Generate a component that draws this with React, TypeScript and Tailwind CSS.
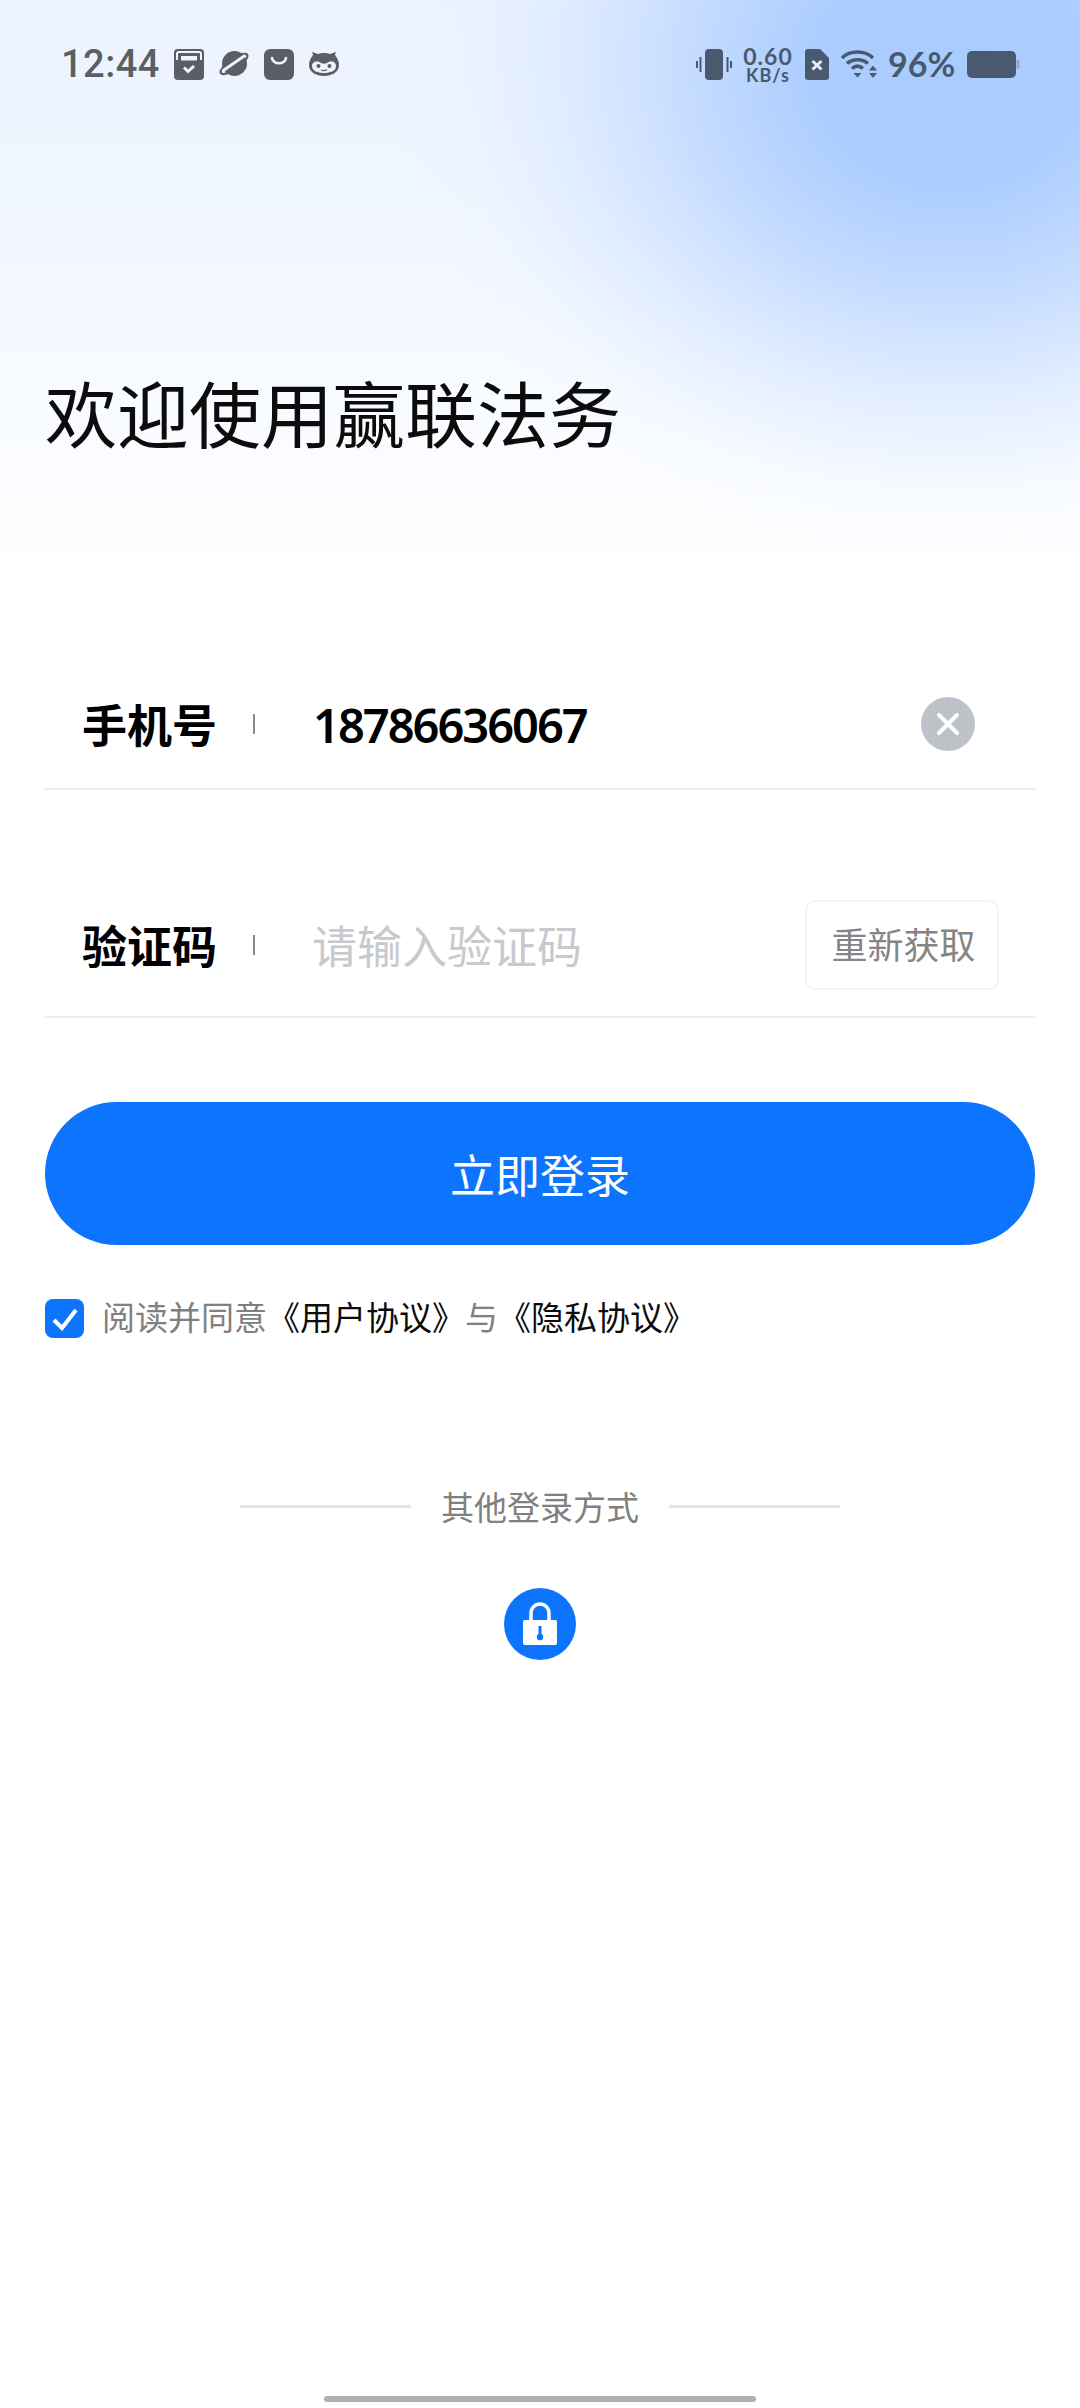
import React from "react";

const cjk = "font-['Noto_Sans_CJK_SC','Noto_Sans',sans-serif]";

function LeftIcons() {
  return (
    <div className="flex items-center gap-[15px] ml-[17px]">
      <svg width="30" height="31" viewBox="0 0 30 31">
        <rect width="30" height="31" rx="4" fill="#5a5f66" />
        <path d="M3 11V5a2 2 0 0 1 2-2h20a2 2 0 0 1 2 2v6" fill="none" stroke="#eef4ff" strokeWidth="2" />
        <rect x="7" y="7" width="16" height="4.500" fill="#eef4ff" />
        <path d="M10 18.500l4 4 6-5.500" fill="none" stroke="#eef4ff" strokeWidth="3" />
      </svg>
      <svg width="30" height="30" viewBox="0 0 30 30">
        <circle cx="15.500" cy="14.500" r="12.500" fill="#5a5f66" />
        <ellipse cx="15" cy="15" rx="16" ry="5" transform="rotate(-35 15 15)" fill="none" stroke="#5a5f66" strokeWidth="2.200" />
        <path d="M3.500 22 L26 6.500" stroke="#eef4ff" strokeWidth="2.800" />
      </svg>
      <svg width="30" height="31" viewBox="0 0 30 31">
        <rect width="30" height="31" rx="6" fill="#5a5f66" />
        <path d="M8 9c1 7 13 7 14 0" fill="none" stroke="#eef4ff" strokeWidth="2.600" strokeLinecap="round" />
      </svg>
      <svg width="30" height="26" viewBox="0 0 30 26">
        <path d="M4 4 L3 1 L9 3 C12 1.500 18 1.500 21 3 L27 1 L26 4 C29 8 30 11 30 14 C30 21 23 25 15 25 C7 25 0 21 0 14 C0 11 1 8 4 4Z" fill="#5a5f66" />
        <path d="M3 15c0-4 5-6 9-3 2 1 4 1 6 0 4-3 9-1 9 3 0 5-6 7-12 7S3 20 3 15Z" fill="#eef4ff" />
        <circle cx="9.500" cy="15" r="2" fill="#5a5f66" />
        <circle cx="20.500" cy="15" r="2" fill="#5a5f66" />
        <path d="M12 19c2 1 4 1 6-.5" fill="none" stroke="#5a5f66" strokeWidth="1.200" />
      </svg>
    </div>
  );
}

function RightIcons() {
  return (
    <div className="flex items-center text-[#4a5a6e] font-['Lato','Noto_Sans',sans-serif]">
      <svg width="36" height="31" viewBox="0 0 36 31">
        <rect x="9" y="0" width="18" height="31" rx="4" fill="#4a5a6e" />
        <path d="M4.500 8v15M1 12v7M31.500 8v15M35 12v7" stroke="#4a5a6e" strokeWidth="2" />
      </svg>
      <div className="w-[50px] ml-[11px] flex flex-col items-center font-bold">
        <span className="text-[23px] leading-[21px] tracking-[1px] whitespace-nowrap">0.60</span>
        <span className="text-[18px] leading-[16px] tracking-[1px] whitespace-nowrap">KB/s</span>
      </div>
      <svg className="ml-[12px]" width="24" height="31" viewBox="0 0 24 31">
        <path d="M3 0h12l9 9v19a3 3 0 0 1-3 3H3a3 3 0 0 1-3-3V3a3 3 0 0 1 3-3Z" fill="#4a5a6e" />
        <path d="M7.500 12l9 8.500M16.500 12l-9 8.500" stroke="#e4eeff" strokeWidth="3" />
      </svg>
      <svg className="ml-[12px]" width="37" height="30" viewBox="0 0 37 30">
        <path d="M1 9C9 1 24 1 32 9M6 14.500c6-5 15-5 21 0M11 19.500c3.500-3 7.500-3 11 0" fill="none" stroke="#4a5a6e" strokeWidth="3.500" />
        <path d="M12.500 24h8l-4 4.500Z" fill="#4a5a6e" />
        <path d="M28 21.500h8l-4-5ZM28 24h8l-4 5Z" fill="#4a5a6e" />
      </svg>
      <span className="ml-[10px] w-[68px] text-[34px] leading-[34px] font-bold whitespace-nowrap">96%</span>
      <svg className="ml-[11px]" width="53" height="27" viewBox="0 0 53 27">
        <rect width="49" height="27" rx="5" fill="#4a5a6e" />
        <path d="M49.500 9h1a2 2 0 0 1 2 2v5a2 2 0 0 1-2 2h-1Z" fill="#8ea7c9" />
      </svg>
    </div>
  );
}

export default function App() {
  return (
    <div
      className={`${cjk} w-[1080px] h-[2408px] overflow-hidden flex flex-col bg-white bg-[radial-gradient(ellipse_560px_480px_at_950px_70px,#a9ccff_0%,#abcdff_24%,#c2daff_44%,rgba(214,230,255,0.65)_68%,rgba(230,240,255,0.2)_88%,rgba(240,246,255,0)_100%),linear-gradient(180deg,#ecf3ff_0px,#f0f6ff_200px,#f8fbff_400px,#ffffff_590px)]`}
    >
      <div className="h-[128px] pl-[61px] pr-[60px] flex items-center justify-between">
        <div className="flex items-center">
          <span className="w-[96px] text-[38px] leading-[38px] font-medium font-['Roboto',sans-serif] text-[#5a5f66] tracking-[0.5px]">12:44</span>
          <LeftIcons />
        </div>
        <RightIcons />
      </div>

      <div className="px-[45px] flex flex-col flex-1">
        <h1 className="mt-[238px] text-[72px] leading-[90px] font-normal text-[#0c0c0c]">欢迎使用赢联法务</h1>

        <div className="mt-[204px] h-[130px] flex items-center border-b-2 border-[#ececec]">
          <span className="ml-[37px] w-[133px] text-[45px] leading-[60px] font-bold text-black whitespace-nowrap">手机号</span>
          <span className="ml-[38px] w-[2px] h-[20px] bg-[#8a8a8a]" />
          <span className="ml-[58px] mt-[2px] flex-1 text-[47px] leading-[60px] font-semibold font-['Noto_Sans',sans-serif] tracking-[-2px] text-black">18786636067</span>
          <span className="mr-[60px] w-[54px] h-[54px] rounded-full bg-[#bdc2c9] flex items-center justify-center">
            <svg width="24" height="24" viewBox="0 0 24 24">
              <path d="M3 3l18 18M21 3L3 21" stroke="#fff" strokeWidth="4" strokeLinecap="round" />
            </svg>
          </span>
        </div>

        <div className="mt-[100px] h-[128px] pb-[17px] flex items-center border-b-2 border-[#ececec]">
          <span className="ml-[37px] w-[133px] text-[45px] leading-[60px] font-bold text-black whitespace-nowrap">验证码</span>
          <span className="ml-[38px] w-[2px] h-[20px] bg-[#8a8a8a]" />
          <span className="ml-[57px] flex-1 text-[45px] leading-[60px] text-[#c8c9cc]">请输入验证码</span>
          <span className="mr-[36px] w-[194px] h-[90px] pb-[4px] pl-[3px] border-2 border-[#f3f3f3] rounded-[10px] flex items-center justify-center text-[36px] text-[#858585]">重新获取</span>
        </div>

        <button className="mt-[84px] h-[143px] rounded-full bg-[#0d75fd] text-white text-[45px] leading-[60px]">立即登录</button>

        <div className="mt-[54px] h-[39px] flex items-center">
          <span className="w-[39px] h-[39px] rounded-[8px] bg-[#0d75fd] flex items-center justify-center">
            <svg width="28" height="24" viewBox="0 0 28 24">
              <path d="M3 13l8 8L25 3" fill="none" stroke="#fff" strokeWidth="4" />
            </svg>
          </span>
          <span className="ml-[18px] mb-[5px] text-[33px] leading-[44px] text-[#808080] whitespace-nowrap">
            阅读并同意<span className="text-[#0c0c0c]">《用户协议》</span>与<span className="text-[#0c0c0c]">《隐私协议》</span>
          </span>
        </div>

        <div className="mt-[146px] h-[44px] flex items-center justify-center">
          <span className="w-[171px] h-[3px] bg-[#e4e4e4]" />
          <span className="mx-[30px] text-[33px] leading-[44px] text-[#808080]">其他登录方式</span>
          <span className="w-[171px] h-[3px] bg-[#e4e4e4]" />
        </div>

        <div className="mt-[60px] flex justify-center">
          <span className="w-[72px] h-[72px] rounded-full bg-[#0d75fd] flex items-center justify-center">
            <svg width="36" height="44" viewBox="0 0 36 44">
              <path d="M9 20V11a9 9 0 0 1 18 0v9" fill="none" stroke="#fff" strokeWidth="3.500" />
              <rect x="1" y="18" width="34" height="25" rx="2" fill="#fff" />
              <circle cx="18" cy="35" r="3.200" fill="#0d75fd" />
              <rect x="16.500" y="24" width="3" height="11" fill="#0d75fd" />
            </svg>
          </span>
        </div>

        <div className="mt-auto mb-[6px] flex justify-center">
          <span className="w-[432px] h-[6px] rounded-full bg-[#b0b0b0]" />
        </div>
      </div>
    </div>
  );
}
